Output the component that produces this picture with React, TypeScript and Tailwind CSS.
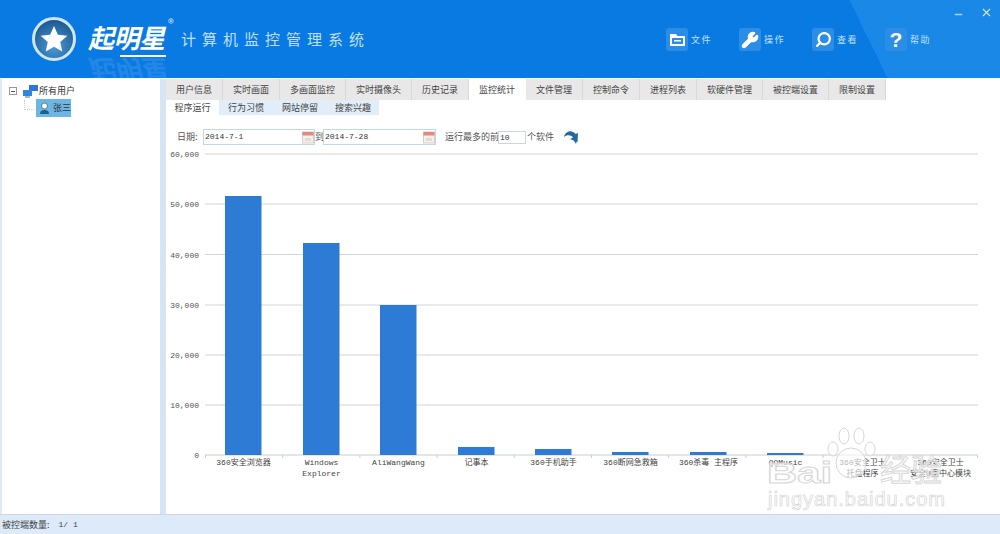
import { Minus, Search, Wrench, X } from 'lucide-react';

const cjk = "font-['Noto_Sans_CJK_SC','Noto_Sans',sans-serif]";

const tabs = [
  { name: '用户信息', width: 'w-[57px]' },
  { name: '实时画面', width: 'w-[57px]' },
  { name: '多画面监控', width: 'w-[66px]' },
  { name: '实时摄像头', width: 'w-[66px]' },
  { name: '历史记录', width: 'w-[57px]' },
  { name: '监控统计', width: 'w-[57px]' },
  { name: '文件管理', width: 'w-[57px]' },
  { name: '控制命令', width: 'w-[57px]' },
  { name: '进程列表', width: 'w-[57px]' },
  { name: '软硬件管理', width: 'w-[66px]' },
  { name: '被控端设置', width: 'w-[66px]' },
  { name: '限制设置', width: 'w-[57px]' },
];

const yAxis = [
  { label: '60,000', y: 154 },
  { label: '50,000', y: 204 },
  { label: '40,000', y: 254.5 },
  { label: '30,000', y: 305 },
  { label: '20,000', y: 355 },
  { label: '10,000', y: 405 },
  { label: '0', y: 455 },
];

const bars = [
  { x: 225, top: 196, lines: ['360安全浏览器'] },
  { x: 303, top: 243, lines: ['Windows', 'Explorer'] },
  { x: 380, top: 305, lines: ['AliWangWang'] },
  { x: 458, top: 447, lines: ['记事本'] },
  { x: 535, top: 449, lines: ['360手机助手'] },
  { x: 612, top: 452, lines: ['360断网急救箱'] },
  { x: 690, top: 452, lines: ['360杀毒 主程序'] },
  { x: 767, top: 453, lines: ['QQMusic'] },
  { x: 844, top: 455, lines: ['360安全卫士', '托盘程序'] },
  { x: 922, top: 455, lines: ['360安全卫士', '安全U盘中心模块'] },
];

function CalendarIcon() {
  return (
    <svg width="12" height="13" viewBox="0 0 12 13" className="shrink-0">
      <rect x="0.5" y="1" width="11" height="11" fill="#f4efe9" stroke="#d5cfc9" />
      <rect x="0.5" y="1" width="11" height="3.5" fill="#e08a84" />
      <rect x="3" y="7" width="6" height="3" fill="#e0dcd8" />
    </svg>
  );
}

function HeaderButton({ label, children }: { label: string; children: React.ReactNode }) {
  return (
    <div className="flex items-center gap-[3px] w-[73px]">
      <div className="w-[22px] h-[23px] rounded-[3px] bg-[#2c8de6] flex items-center justify-center text-white">
        {children}
      </div>
      <span className="text-[9px] tracking-[1.5px] text-[#c4e0f8]">{label}</span>
    </div>
  );
}

function Chart() {
  return (
    <svg viewBox="166 146 834 368" className="w-[834px] h-[368px] block">
      {yAxis.map(t => (
        <g key={t.label}>
          <line x1="205" x2="978" y1={t.y} y2={t.y} stroke={t.y === 455 ? '#c8ced4' : '#d4d4d4'} />
          <text x="199" y={t.y + 3} textAnchor="end" fontSize="8" fill="#555" fontFamily="'Liberation Mono', monospace">
            {t.label}
          </text>
        </g>
      ))}
      {Array.from({ length: 11 }).map((_, i) => (
        <line key={i} x1={205.5 + i * 77.2} x2={205.5 + i * 77.2} y1="455" y2="458" stroke="#c8ced4" />
      ))}
      {bars.map(b => (
        <g key={b.x}>
          <rect x={b.x} y={b.top} width="36.5" height={455 - b.top} fill="#2e7bd6" />
          {b.lines.map((line, i) => (
            <text
              key={line}
              x={b.x + 18.5}
              y={465 + i * 10.5}
              textAnchor="middle"
              fontSize="8"
              fill="#444"
              fontFamily="'Liberation Mono', 'Noto Sans CJK SC', monospace"
            >
              {line}
            </text>
          ))}
        </g>
      ))}
      {/* watermark */}
      <g fill="#fff" fillOpacity="0.6" stroke="#d6d6d6" strokeWidth="1">
        <text x="767" y="483" fontSize="30" textLength="65" lengthAdjust="spacingAndGlyphs" fontFamily="'Liberation Sans', sans-serif" fontWeight="700">Bai</text>
        <circle cx="851" cy="463" r="15" />
        <ellipse cx="833" cy="449" rx="5" ry="7" />
        <ellipse cx="844" cy="436" rx="5" ry="8" />
        <ellipse cx="859" cy="436" rx="5" ry="8" />
        <ellipse cx="870" cy="449" rx="5" ry="7" />
        <text x="880" y="481" fontSize="31" fontFamily="'Noto Sans CJK SC', sans-serif">经验</text>
      </g>
      <text x="768" y="506" fontSize="20" textLength="177" fill="#fff" stroke="#d6d6d6" strokeWidth="0.7" fontFamily="'Liberation Sans', sans-serif">
        jingyan.baidu.com
      </text>
    </svg>
  );
}

export default function App() {
  return (
    <div className={`w-[1000px] h-[534px] flex flex-col overflow-hidden bg-white ${cjk}`}>
      {/* Header */}
      <header className="h-[78px] shrink-0 relative flex items-center bg-[linear-gradient(64deg,#0a7ae3_85.5%,#1a88e6_85.5%)]">
        <div className="ml-[32px] w-[44px] h-[44px] rounded-full border-[3px] border-[#cfe6f8] bg-[radial-gradient(circle_at_50%_70%,#4a9bd8,#13497f)] flex items-center justify-center">
          <svg width="30" height="30" viewBox="0 0 24 24" fill="#fff">
            <path d="M12 1.5l3.1 7 7.6.8-5.7 5.1 1.6 7.5-6.6-3.8-6.6 3.8 1.6-7.5L1.3 9.3l7.6-.8z" />
          </svg>
        </div>
        <div className="relative ml-[12px] w-[94px] h-[44px]">
          <span className="block text-[26px] leading-[40px] font-bold italic text-white tracking-[-0.5px]">起明星</span>
          <span className="block w-[46px] h-[2px] ml-[32px] -mt-[2px] bg-white"></span>
          <span className="absolute left-0 top-[34px] text-[26px] leading-[40px] font-bold italic text-white opacity-10 -scale-y-100">起明星</span>
          <span className="absolute left-[80px] -top-[3px] text-[12px] text-[#cfe6f8]">®</span>
        </div>
        <div className="ml-[-1px] mt-[1px] text-[15px] tracking-[6px] text-[#bfe0f8] whitespace-nowrap">计算机监控管理系统</div>

        <div className="absolute left-[666px] top-[28px] flex">
          <HeaderButton label="文件">
            <svg width="15" height="14" viewBox="0 0 15 14" fill="#fff">
              <path fillRule="evenodd" d="M0 1h6l1.5 2H15v10H0zM2 5v6h11V5zM4 7h7v1.5H4z" />
            </svg>
          </HeaderButton>
          <HeaderButton label="操作">
            <Wrench size={18} fill="#fff" strokeWidth={2} />
          </HeaderButton>
          <HeaderButton label="查看">
            <Search size={17} strokeWidth={3.2} className="-scale-x-100" />
          </HeaderButton>
          <HeaderButton label="帮助">
            <span className="text-[21px] leading-none font-bold font-['Liberation_Sans',sans-serif]">?</span>
          </HeaderButton>
        </div>

        <Minus size={11} strokeWidth={3} className="absolute left-[953px] top-[9px] text-[#a9d2f3]" />
        <X size={13} strokeWidth={2} className="absolute left-[980px] top-[6px] text-[#cfe6f8]" />
      </header>

      {/* Main */}
      <div className="flex-1 flex pt-px min-h-0">
        {/* User tree */}
        <aside className="w-[166px] shrink-0 flex border-l-2 border-[#dfeaf4]">
          <div className="flex-1 pt-[4px] text-[9px] text-[#333]">
            <div className="flex items-center h-[16px] pl-[7px]">
              <span className="w-[8px] h-[8px] border border-[#999] flex items-center justify-center mr-[6px]">
                <span className="w-[4px] h-px bg-[#555]"></span>
              </span>
              <svg width="15" height="15" viewBox="0 0 15 15" className="mr-px">
                <rect x="6" y="1" width="9" height="6" fill="#2a78d2" />
                <rect x="0" y="6" width="9" height="6" fill="#2f86dc" />
                <rect x="2" y="12" width="5" height="2" fill="#9dbbd6" />
              </svg>
              <span>所有用户</span>
            </div>
            <div className="flex items-center h-[18px] pl-[22px]">
              <span className="w-[10px] h-[10px] border-l border-b border-dotted border-[#ccc] -mt-[6px] mr-[2px]"></span>
              <div className="w-[35px] h-[18px] bg-[#6bb6e4] flex items-center">
                <svg width="13" height="13" viewBox="0 0 13 13" className="ml-[2px] mr-[2px]">
                  <circle cx="6.5" cy="4" r="3" fill="#fff" stroke="#355" strokeWidth="0.7" />
                  <path d="M2 12c0-3 2-4 4.5-4S11 9 11 12z" fill="#1d5f8f" />
                </svg>
                <span className="whitespace-nowrap">张三</span>
              </div>
            </div>
          </div>
          <div className="w-[6px] bg-[#d5e5f3]"></div>
        </aside>

        {/* Content */}
        <main className="flex-1 min-w-0 flex flex-col">
          <div className="flex h-[21px] shrink-0 text-[9px] text-[#444]">
            {tabs.map(tab => (
              <div
                key={tab.name}
                className={`${tab.width} flex items-center justify-center whitespace-nowrap border-r ${
                  tab.name === '监控统计' ? 'bg-white border-white' : 'bg-[#e8e8e8] border-[#d8d8d8]'
                }`}
              >
                {tab.name}
              </div>
            ))}
          </div>

          <div className="flex h-[15px] shrink-0 text-[9px] text-[#444]">
            <div className="w-[53px] flex items-center justify-center">程序运行</div>
            <div className="w-[54px] bg-[#e1edf9] flex items-center justify-center">行为习惯</div>
            <div className="w-[54px] bg-[#e1edf9] flex items-center justify-center">网站停留</div>
            <div className="w-[52px] bg-[#e1edf9] flex items-center justify-center">搜索兴趣</div>
          </div>

          <div className="mt-[14px] h-[16px] shrink-0 flex items-center pl-[11px] text-[9px] text-[#555]">
            <span className="w-[26px]">日期:</span>
            <div className="w-[112px] h-[16px] border border-[#c5d6e6] flex items-center justify-between pl-px text-[8px] font-['Liberation_Mono','Noto_Sans_CJK_SC',monospace] text-[#333]">
              2014-7-1
              <CalendarIcon />
            </div>
            <span className="w-[8px]">到</span>
            <div className="w-[113px] h-[16px] border border-[#c5d6e6] flex items-center justify-between pl-px text-[8px] font-['Liberation_Mono','Noto_Sans_CJK_SC',monospace] text-[#333]">
              2014-7-28
              <CalendarIcon />
            </div>
            <span className="ml-[9px] w-[53px] whitespace-nowrap">运行最多的前</span>
            <div className="w-[28px] h-[13px] border border-[#c5d6e6] pl-px text-[8px] leading-[11px] font-['Liberation_Mono',monospace] text-[#333]">10</div>
            <span className="ml-px whitespace-nowrap">个软件</span>
            <svg width="16" height="15" viewBox="0 0 16 15" className="ml-[9px]">
              <path d="M1 7C2 1 9-1 12.500 4L15 3l-.500 9L7 9l3-1.500C8 5 4 4.500 1 7z" fill="#2568a0" />
              <path d="M10 9l4 1-1 4z" fill="#2568a0" />
            </svg>
          </div>

          <div className="mt-px">
            <Chart />
          </div>
        </main>
      </div>

      {/* Status bar */}
      <footer className="h-[20px] shrink-0 bg-[#dceafa] border-t border-[#cfd8e2] flex items-center pl-[2px] text-[9px] text-[#444]">
        被控端数量: <span className="ml-[9px] font-['Liberation_Mono',monospace] text-[8px]">1/ 1</span>
      </footer>
    </div>
  );
}
